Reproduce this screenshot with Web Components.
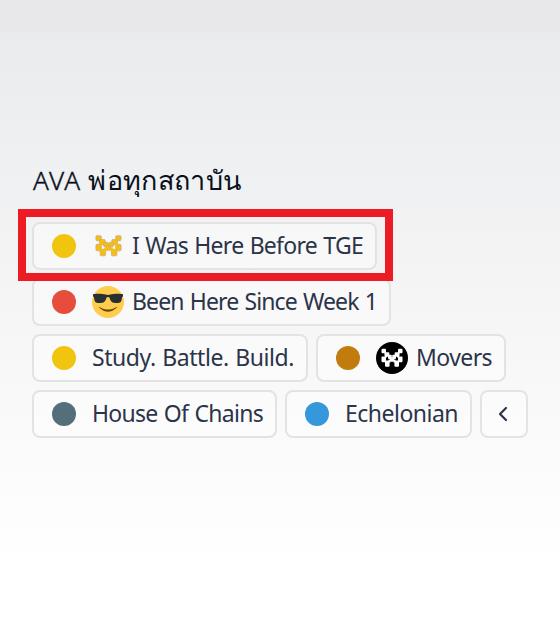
<!DOCTYPE html>
<html lang="th">
<head>
<meta charset="utf-8">
<title>Roles</title>
<style>
  html, body {
    margin: 0;
    height: 100%;
  }
  body {
    font-family: "Noto Sans", "Open Sans", sans-serif;
    overflow: hidden;
  }
  bdi {
    font-size: 27px;
    letter-spacing: .35px;
    margin-left: -1px;
    -webkit-text-stroke: 0;
  }
</style>
</head>
<body>
<profile-roles>
  <span slot="name">AVA <bdi>พ่อทุกสถาบัน</bdi></span>
  <role-pill color="#f1c40f" fit="231" marked>
    <mover-icon slot="icon" tone="gold"></mover-icon>I Was Here Before TGE
  </role-pill>
  <role-pill color="#e74c3c" fit="245">
    <cool-icon slot="icon"></cool-icon>Been Here Since Week 1
  </role-pill>
  <role-pill color="#f1c40f" fit="202">Study. Battle. Build.</role-pill>
  <role-pill color="#c27c0e" fit="76">
    <mover-icon slot="icon"></mover-icon>Movers
  </role-pill>
  <role-pill color="#546e7a" fit="171">House Of Chains</role-pill>
  <role-pill color="#3498db" fit="113">Echelonian</role-pill>
  <collapse-button></collapse-button>
</profile-roles>
<script>
const rolesTemplate = document.createElement('template')
rolesTemplate.innerHTML = `
<style>
    :host {
      display: block;
      box-sizing: border-box;
      height: 632px;
      padding: 161px 24px 0 32px;
      background:
        linear-gradient(#e8e8ea, #e8e8ea) 0 0 / 100% 32px no-repeat,
        linear-gradient(#eaebed 32px, #eff0f1 160px, #f4f4f5 280px, #f9f9f9 400px, #ffffff 570px);
    }
    h1 {
      margin: 0 0 23px;
      padding-left: 1px;
      height: 38px;
      font-size: 26px;
      font-weight: 300;
      line-height: 38px;
      letter-spacing: 1.2px;
      -webkit-text-stroke: .4px #0b1020;
      color: #0b1020;
      white-space: nowrap;
    }
    div {
      display: flex;
      flex-wrap: wrap;
      gap: 8px;
    }
  </style>
  <h1><slot name="name"></slot></h1>
  <div><slot></slot></div>
`
customElements.define('profile-roles',
  /**
   * Represents the name and the list of roles of a member.
   */
  class extends HTMLElement {
    constructor () {
      super()

      this.attachShadow({ mode: 'open' })
        .appendChild(rolesTemplate.content.cloneNode(true))
    }
  }
)

const pillTemplate = document.createElement('template')
pillTemplate.innerHTML = `
<style>
    :host {
      position: relative;
      display: flex;
      align-items: center;
      box-sizing: border-box;
      height: 48px;
      padding: 0 12px 0 18px;
      border: 2px solid #e3e3e4;
      border-radius: 8px;
      background: rgba(255, 255, 255, .4);
      color: #2b3449;
      font-size: 23px;
      line-height: 32px;
      word-spacing: 1px;
      white-space: nowrap;
    }
    :host([marked]) {
      z-index: 1;
    }
    :host([marked])::after {
      content: "";
      position: absolute;
      inset: -15px -18px -13px -16px;
      border: 8px solid #ed1c24;
    }
    i {
      width: 24px;
      height: 24px;
      margin-right: 16px;
      border-radius: 50%;
    }
    span {
      padding-bottom: 2px;
    }
    ::slotted([slot="icon"]) {
      margin-right: 8px;
    }
  </style>
  <i></i>
  <slot name="icon"></slot>
  <span><slot></slot></span>
`
customElements.define('role-pill',
  /**
   * Represents one role with its colour dot.
   */
  class extends HTMLElement {
    #label

    constructor () {
      super()

      this.attachShadow({ mode: 'open' })
        .appendChild(pillTemplate.content.cloneNode(true))

      this.#label = this.shadowRoot.querySelector('span')
    }

    connectedCallback () {
      this.shadowRoot.querySelector('i').style.background = this.getAttribute('color')
      this.#fitLabel()
    }

    /**
     * Spreads the letters so that the label takes the width in "fit".
     */
    #fitLabel () {
      const target = Number(this.getAttribute('fit'))
      const natural = this.#label.getBoundingClientRect().width
      const count = this.textContent.trim().length
      this.#label.style.letterSpacing = `${(target - natural) / count}px`
      this.#label.style.width = `${target}px`
    }
  }
)

const moverTemplate = document.createElement('template')
moverTemplate.innerHTML = `
<style>
    :host {
      display: block;
      width: 32px;
      height: 32px;
    }
    svg {
      display: block;
    }
    g {
      fill: #fff;
    }
    :host([tone="gold"]) circle {
      display: none;
    }
    :host([tone="gold"]) g {
      fill: #f5bd16;
      stroke: #c5ab72;
      stroke-width: .6;
      transform: translate(16.500px, 16px) scale(1.2, 1.12) translate(-16px, -16px);
    }
  </style>
  <svg width="32" height="32" viewBox="0 0 32 32">
    <circle cx="16" cy="16" r="16"/>
    <g>
      <rect x="5.500" y="6.800" width="4.500" height="4.500" rx="1"/>
      <rect x="22" y="6.800" width="4.500" height="4.500" rx="1"/>
      <rect x="8.500" y="10.200" width="4.800" height="4.600" rx="1"/>
      <rect x="18.700" y="10.200" width="4.800" height="4.600" rx="1"/>
      <rect x="12" y="12.700" width="3.800" height="4.200" rx="1"/>
      <rect x="16.200" y="12.700" width="3.800" height="4.200" rx="1"/>
      <rect x="14" y="15.500" width="4" height="4.300" rx="1"/>
      <rect x="5.500" y="14.500" width="4.500" height="5.800" rx="1"/>
      <rect x="22" y="14.500" width="4.500" height="5.800" rx="1"/>
      <rect x="9" y="19.800" width="4.600" height="5" rx="1"/>
      <rect x="18.400" y="19.800" width="4.600" height="5" rx="1"/>
      <path stroke="none" d="M9 13.500h2v2H9zM21 13.500h2v2h-2zM9 18.500h3.500v2.500H9zM19.500 18.500H23V21h-3.500zM12.500 17.500h2v3h-2zM17.500 17.500h2v3h-2z"/>
    </g>
  </svg>
`
customElements.define('mover-icon',
  /**
   * Represents the Movers emblem, on a black disc or in gold.
   */
  class extends HTMLElement {
    constructor () {
      super()

      this.attachShadow({ mode: 'open' })
        .appendChild(moverTemplate.content.cloneNode(true))
    }
  }
)

const coolTemplate = document.createElement('template')
coolTemplate.innerHTML = `
<style>
    :host {
      display: block;
      width: 32px;
      height: 32px;
    }
    svg {
      display: block;
    }
  </style>
  <svg width="32" height="32" viewBox="0 0 36 36">
    <circle cx="18" cy="18" r="18" fill="#ffcc4d"/>
    <path fill="#664500" d="M28.5 23.4C26.5 26 22.700 29 18 29S9.500 26 7.500 23.400c1 .2 1.700.6 2.500 1.100 2 1.100 4.700 2 8 2s6-.9 8-2c.8-.5 1.500-.9 2.500-1.100z"/>
    <path fill="#292f33" d="M1.200 9.300C3.500 8.500 12 8.500 15.500 9.700c1.600.5 3.400.5 5 0C24 8.500 32.500 8.500 34.800 9.300l.2 2.300-1.200.7c-.3 3.500-.8 5.200-2.300 6.200-2.400 1.100-7 1-9.200-.5-1.400-1.300-2.100-3.200-2.700-5-.3-.8-2.900-.8-3.200 0-.6 1.800-1.300 3.700-2.700 5-2.200 1.500-6.800 1.600-9.200.5-1.500-1-2-2.700-2.300-6.200L1 11.600z"/>
  </svg>
`
customElements.define('cool-icon',
  /**
   * Represents a smiling face with sunglasses.
   */
  class extends HTMLElement {
    constructor () {
      super()

      this.attachShadow({ mode: 'open' })
        .appendChild(coolTemplate.content.cloneNode(true))
    }
  }
)

const collapseTemplate = document.createElement('template')
collapseTemplate.innerHTML = `
<style>
    :host {
      display: block;
    }
    button {
      display: grid;
      place-items: center;
      width: 48px;
      height: 48px;
      padding: 0;
      border: 2px solid #e4e4e5;
      border-radius: 8px;
      background: rgba(255, 255, 255, .4);
    }
  </style>
  <button aria-label="collapse">
    <svg width="24" height="24" viewBox="0 0 24 24" fill="none" stroke="#2b3449" stroke-width="2.200" stroke-linecap="round" stroke-linejoin="round">
      <path d="M14 6L8 12l6 6"/>
    </svg>
  </button>
`
customElements.define('collapse-button',
  /**
   * Represents the button that folds the list.
   */
  class extends HTMLElement {
    constructor () {
      super()

      this.attachShadow({ mode: 'open' })
        .appendChild(collapseTemplate.content.cloneNode(true))
    }
  }
)
</script>
</body>
</html>
